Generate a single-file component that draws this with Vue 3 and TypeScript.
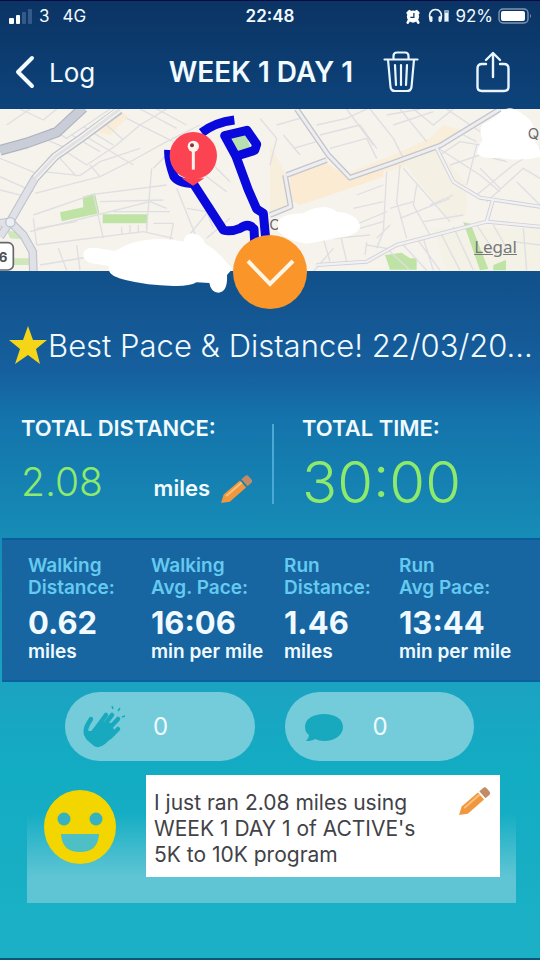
<script setup lang="ts">
interface Stat {
  label: [string, string]
  value: string
  unit: string
}

const stats: Stat[] = [
  { label: ['Walking', 'Distance:'], value: '0.62', unit: 'miles' },
  { label: ['Walking', 'Avg. Pace:'], value: '16:06', unit: 'min per mile' },
  { label: ['Run', 'Distance:'], value: '1.46', unit: 'miles' },
  { label: ['Run', 'Avg Pace:'], value: '13:44', unit: 'min per mile' },
]

const minorRoads: string[] = [
  'M0 160L110 205M0 215L100 260M0 255L80 275M20 60L90 12M60 12L130 45L170 12M150 70L200 100L330 12M130 100L200 130',
  'M190 135L260 180L350 120L420 60L500 12M215 90L300 140M250 65L340 120M320 60L370 105M380 40L520 110M420 12L530 70M470 12L560 60',
  'M130 200L240 212L300 170L420 130M180 160L230 215M250 90L400 180M300 215L270 180',
  'M105 265L300 215L400 165L500 110L600 60M100 330L280 268L500 240M90 380L290 330L450 290L500 310',
  'M280 268L310 400M100 340L110 420M110 420L430 380L520 400M175 430L200 496M455 190L440 370M460 190L520 130M300 290L490 285M340 320L510 320',
  'M365 390L365 365M390 385L390 360M415 385L415 360M440 380L440 355M460 355L520 355L510 410M530 250L590 400M560 310L620 320L640 370M600 200L680 260M640 180L690 230',
  'M620 400L690 340M560 400L640 300M110 370L230 350M120 480L300 450M230 420L240 496',
  'M780 40L830 100L810 180M830 60L900 40M850 90L900 150M880 130L950 110M950 60L1040 40L1100 12M960 90L1080 60L1130 130M990 130L1100 100L1130 160',
  'M1040 12L1120 120M1110 12L1180 100L1210 160M1160 30L1260 12M1180 60L1300 20M1200 12L1280 110M1240 12L1300 60L1360 12M1300 120L1440 210L1500 260',
  'M1320 150L1380 110L1500 130M1350 180L1440 150L1520 170M1390 90L1430 110M1400 240L1430 120M1430 270L1540 180L1620 130M1460 290L1570 190L1620 220M1500 250L1440 190M1550 230L1620 300',
  'M1060 310L1150 290M1065 360L1160 320M1070 270L1150 240M1080 370L1150 350M1130 400L1170 360M1160 200L1150 380L1130 430M1200 180L1190 290L1220 400M1250 240L1240 300L1290 390',
  'M1210 190L1350 350M1200 340L1350 280M1170 310L1240 290M1270 350L1390 330M1290 300L1360 270M1270 400L1300 496M1320 380L1380 496M1360 365L1420 496M1210 420L1280 496M1250 400L1320 496',
  'M1100 420L1160 430L1230 496M1100 410L1095 450M1010 340L1040 470M1000 400L1110 390M940 500L1000 430M970 400L990 470M1430 360L1490 450M1480 360L1520 430M1570 370L1580 496M1540 410L1620 420M1340 12L1500 120',
]
</script>

<template>
  <main class="screen">
    <div class="status">
      <div class="carrier">
        <svg class="signal" viewBox="0 0 25 16" aria-hidden="true">
          <rect x="1" y="10" width="5" height="6" rx="1" fill="#fff" />
          <rect x="8" y="7" width="4" height="9" rx="1" fill="#fff" />
          <rect x="14" y="4" width="4" height="12" rx="1" fill="#345a8a" />
          <rect x="20" y="1" width="4" height="15" rx="1" fill="#345a8a" />
        </svg>
        <span>3</span><span class="network">4G</span>
      </div>
      <time class="clock">22:48</time>
      <div class="power">
        <svg class="alarm" viewBox="0 0 16 16" aria-hidden="true">
          <path d="M2 4L4 2M12 2L14 4M3 13L2 15M13 13L14 15" stroke="#fff" stroke-width="3" stroke-linecap="round" />
          <circle cx="8" cy="8" r="7" fill="#fff" />
          <path d="M9 4V9H5" fill="none" stroke="#0b3565" stroke-width="1.400" />
        </svg>
        <svg class="headset" viewBox="0 0 22 16" aria-hidden="true">
          <path d="M2.500 12C0 6 3 1.500 7.500 1.500S15 6 12.500 12" fill="none" stroke="#e9f4ff" stroke-width="1.600" />
          <rect x="1.500" y="8" width="3" height="6" rx="1.500" fill="#e9f4ff" />
          <rect x="10.500" y="8" width="3" height="6" rx="1.500" fill="#e9f4ff" />
          <rect x="16" y="2" width="5" height="12" rx="1" fill="#8eabc5" />
          <rect x="17" y="5" width="3" height="8" fill="#e9f4ff" />
        </svg>
        <span>92%</span>
        <svg class="battery" viewBox="0 0 34 16" aria-hidden="true">
          <rect x="1" y="1" width="29" height="14" rx="4" fill="none" stroke="#8097b2" stroke-width="1.400" />
          <rect x="3" y="3" width="24" height="10" rx="2" fill="#fff" />
          <path d="M32 6Q34 8 32 10Z" fill="#8097b2" />
        </svg>
      </div>
    </div>

    <header class="nav">
      <a class="back" href="#log">
        <svg viewBox="0 0 20 34" aria-hidden="true"><path d="M17 3L3 17L17 31" fill="none" stroke="#f2faff" stroke-width="4" stroke-linecap="round" stroke-linejoin="round" /></svg>
        <span>Log</span>
      </a>
      <h1>WEEK 1 DAY 1</h1>
      <div class="actions">
        <button type="button" aria-label="Delete workout">
          <svg viewBox="0 0 36 42" aria-hidden="true">
            <g fill="none" stroke="#e9f6ff" stroke-width="2.200" stroke-linecap="round" stroke-linejoin="round">
              <path d="M1.500 8.500H34.500M5 8.500L7.500 36Q8 40 12 40H24Q28 40 28.500 36L31 8.500M10.500 8V5Q10.500 1.500 14 1.500H22Q25.500 1.500 25.500 5V8" />
              <path d="M12 14L13 34M18 14V34M24 14L23 34" />
            </g>
          </svg>
        </button>
        <button type="button" aria-label="Share workout">
          <svg viewBox="0 0 36 42" aria-hidden="true">
            <path d="M11 13H7Q2.500 13 2.500 17.500V36Q2.500 40 7 40H29Q33.500 40 33.500 36V17.500Q33.500 13 29 13H25M18 26V3M11 9L18 2L25 9" fill="none" stroke="#e9f6ff" stroke-width="2.400" stroke-linecap="round" stroke-linejoin="round" />
          </svg>
        </button>
      </div>
    </header>

    <section class="map" aria-label="Route map">
      <svg class="chart" viewBox="0 12 1620 486" preserveAspectRatio="xMidYMid slice">
        <defs>
          <clipPath id="frame"><rect x="0" y="12" width="1620" height="486" /></clipPath>
        </defs>
        <g clip-path="url(#frame)">
          <rect x="0" y="12" width="1620" height="486" fill="#f6f3ec" />
          <g fill="#faebd2">
            <path d="M870 210Q900 170 980 175L1055 225L1150 180V215L1050 250L900 300L870 285Z" />
            <path d="M1050 200L1180 150L1290 100L1330 60L1380 75L1310 125L1200 190L1060 220Z" opacity=".7" />
            <path d="M1330 230L1390 240L1400 300L1330 310Z" opacity=".8" />
            <path d="M280 80L370 25L385 35L330 90Z" opacity=".8" />
            <path d="M810 120L860 210L870 300L810 330Z" opacity=".6" />
          </g>
          <g fill="#f4f1e4">
            <path d="M1210 170L1310 130L1400 240L1400 330L1350 350Z" />
            <path d="M1300 370L1620 370V498H1340Z" opacity=".7" />
          </g>
          <g fill="#bfe3a4">
            <path d="M180 322L250 307L248 275L285 265L298 325L185 349Z" />
            <path d="M308 328H442V355H308Z" />
            <path d="M1155 450L1205 443L1230 460H1250V494H1170Z" />
            <path d="M1390 352L1412 356L1465 492L1440 496Z" />
            <path d="M1480 480L1518 465V496H1480Z" />
            <path d="M20 375L60 385L65 403L30 400ZM40 460H90V480H40Z" opacity=".7" />
          </g>
          <g fill="none" stroke="#dfdee2" stroke-width="4" stroke-linejoin="round">
            <path v-for="road in minorRoads" :key="road" :d="road" />
          </g>
          <g fill="none" stroke-linejoin="round">
            <path d="M0 355L30 350L105 220L165 155L250 95L360 15M30 350L70 390L98 440L100 498M30 350L0 395" stroke="#c0c3cd" stroke-width="26" />
            <path d="M105 220L165 155L250 95L360 12" stroke="#f6f3ec" stroke-width="18" />
            <path d="M0 355L30 350L105 220M30 350L70 390L98 440L100 498M30 350L0 395" stroke="#dfe1e7" stroke-width="19" />
            <path d="M105 220L165 155L250 95L360 12" stroke="#e2e2e6" stroke-width="9" />
            <path d="M0 136L80 114L170 82L250 8" stroke="#aeb3c0" stroke-width="32" />
            <path d="M0 136L80 114L170 82L250 8" stroke="#c9cdd7" stroke-width="25" />
            <path d="M890 12L985 150L1050 218L1180 173L1320 122L1500 12M860 210L980 165M855 210L872 305L810 330" stroke="#c4c5cd" stroke-width="17" />
            <path d="M890 12L985 150L1050 218L1180 173L1320 122L1500 12M860 210L980 165M855 210L872 305L810 330" stroke="#eeeef1" stroke-width="9" />
            <path d="M1310 130L1360 230L1440 278L1620 305M950 480L1100 470L1190 420L1460 350L1620 365M1480 280L1460 350" stroke="#cfd0d7" stroke-width="12" />
            <path d="M1310 130L1360 230L1440 278L1620 305M950 480L1100 470L1190 420L1460 350L1620 365M1480 280L1460 350" stroke="#f1f0f2" stroke-width="7" />
          </g>
          <circle cx="31" cy="352" r="14" fill="#eceef2" stroke="#bdc3cf" stroke-width="4" />
          <path d="M696 100L738 88L752 130L712 142Z" fill="#b8dfb0" />
          <g fill="none" stroke="#0a09dc" stroke-width="27" stroke-linejoin="round">
            <path d="M605 83Q645 52 703 45" />
            <path d="M506 135Q504 165 522 215Q535 235 580 236L615 290L670 375Q690 382 720 370Q745 352 762 372L764 410" />
            <path d="M708 154L674 92L741 76L770 118L764 136L708 154L745 255L770 312L790 325L797 400" />
          </g>
          <path d="M545 220L579 242L613 220Z" fill="#fa4253" />
          <circle cx="580" cy="152" r="71" fill="#fc4352" />
          <path d="M580 137V194" stroke="#fff3ed" stroke-width="9" />
          <circle cx="580" cy="124" r="17" fill="#fff3ed" />
          <circle cx="576" cy="121" r="6" fill="#85383c" />
          <text class="place" x="808" y="376">C</text>
          <rect x="-50" y="413" width="90" height="82" rx="16" fill="#fff" stroke="#66686b" stroke-width="5" />
          <text class="route" x="-4" y="471">6</text>
        </g>
        <g fill="#fff">
          <path d="M250 450Q250 425 290 429L345 438Q400 405 460 403Q510 400 550 410Q555 382 580 386Q605 388 615 415Q640 430 665 455L697 492L681 510Q684 560 655 563Q633 563 628 534L590 532Q565 545 520 543Q440 541 380 526Q330 515 327 496L325 483L275 475Q248 467 250 450Z" />
          <path d="M832 350Q850 325 910 325Q970 290 1010 320Q1070 325 1081 362Q1075 392 1015 398Q955 410 920 416Q870 410 835 380Z" />
          <path d="M1432 145Q1435 120 1448 105Q1435 80 1448 57Q1485 40 1505 18Q1530 0 1560 22Q1600 45 1600 70L1588 96Q1610 110 1620 135V156Q1560 170 1500 158Q1440 164 1432 145Z" />
        </g>
        <text class="place" x="1583" y="102">Q</text>
      </svg>
      <a class="legal" href="#legal">Legal</a>
      <button class="collapse" type="button" aria-label="Collapse map">
        <svg viewBox="0 0 74 74" aria-hidden="true"><path d="M15 26L37 49L60 26" fill="none" stroke="#fff5e4" stroke-width="4" /></svg>
      </button>
    </section>

    <h2 class="headline">
      <svg viewBox="0 0 40 40" aria-hidden="true"><path d="M20 1L25 15H39L28 24L32 39L20 30L7 39L12 24L1 15H15Z" fill="#f5d517" /></svg>
      <span>Best Pace &amp; Distance! 22/03/20…</span>
    </h2>

    <section class="totals">
      <div class="total">
        <h3>TOTAL DISTANCE:</h3>
        <div class="distance">
          <span class="amount">2.08</span>
          <span class="unit">miles</span>
          <button class="edit" type="button" aria-label="Edit distance">
            <svg viewBox="0 0 36 32" aria-hidden="true"><g transform="translate(1 31) rotate(-41)"><path d="M0 0L8 -5H31V5H8Z" fill="#ef9840" /><path d="M9 -2H31" stroke="#ffc27c" stroke-width="2" /><path d="M33 -5H38Q41 -5 41 -2V2Q41 5 38 5H33Z" fill="#c28b65" /></g></svg>
          </button>
        </div>
      </div>
      <div class="total time">
        <h3>TOTAL TIME:</h3>
        <span class="duration">30:00</span>
      </div>
    </section>

    <dl class="stats">
      <div v-for="(stat, i) in stats" :key="i" class="stat">
        <dt>{{ stat.label[0] }}<br />{{ stat.label[1] }}</dt>
        <dd class="value">{{ stat.value }}</dd>
        <dd class="measure">{{ stat.unit }}</dd>
      </div>
    </dl>

    <div class="reactions">
      <button type="button" aria-label="Applaud, 0">
        <svg viewBox="0 0 46 46" aria-hidden="true">
          <path d="M3 27Q3 33 6 36L13 42Q18 45 24 40L35 30L30 19L20 17L10 27Z" fill="#18a9bf" />
          <g fill="none" stroke="#18a9bf" stroke-width="4.500" stroke-linecap="round">
            <path d="M5 30Q4 25 7 20L10 15M14 26L25 11M19 27L31 11M24 29L37 15M29 33L37 25" />
          </g>
          <path d="M32 5L31 2M37 7L39 4M41 13L44 12" fill="none" stroke="#18a9bf" stroke-width="1.500" />
        </svg>
        <span>0</span>
      </button>
      <button type="button" aria-label="Comment, 0">
        <svg viewBox="0 0 46 46" aria-hidden="true"><path d="M23 10C12 10 4 15 4 23Q4 28 8 31Q8 34 5 37Q11 37 14 35Q18 37 23 37C34 37 42 31 42 23S34 10 23 10Z" fill="#18a9bf" /></svg>
        <span>0</span>
      </button>
    </div>

    <section class="post">
      <svg class="face" viewBox="0 0 72 74" aria-hidden="true">
        <ellipse cx="36" cy="37" rx="36" ry="37" fill="#f3d500" />
        <circle cx="20" cy="29" r="6.500" fill="#35b4c0" />
        <circle cx="52" cy="29" r="6.500" fill="#35b4c0" />
        <path d="M17 44H55Q54 62 36 62T17 44Z" fill="#4ebfc4" />
      </svg>
      <div class="message">
        <p>I just ran 2.08 miles using WEEK 1 DAY 1 of ACTIVE's 5K to 10K program</p>
        <button class="edit" type="button" aria-label="Edit message">
          <svg viewBox="0 0 36 32" aria-hidden="true"><g transform="translate(1 31) rotate(-41)"><path d="M0 0L8 -5H31V5H8Z" fill="#ef9840" /><path d="M9 -2H31" stroke="#ffc27c" stroke-width="2" /><path d="M33 -5H38Q41 -5 41 -2V2Q41 5 38 5H33Z" fill="#c28b65" /></g></svg>
        </button>
      </div>
    </section>
  </main>
</template>

<style>
body {
  margin: 0;
  background: #1ab0c6;
}
</style>

<style scoped>
* {
  box-sizing: border-box;
}

.screen {
  min-height: 100vh;
  overflow: hidden;
  border-top: 1px solid #060b45;
  border-bottom: 2px solid #075878;
  background: linear-gradient(#0b3464 0, #0d4279 100px, #11508a 270px, #165f9e 370px, #1473ab 415px, #168bb6 530px, #1ba4c2 690px, #12acc3 770px, #1bb0c5 930px);
  color: #f1faff;
  font-family: Inter, "Liberation Sans", sans-serif;
}

h1,
h2,
h3,
p,
dl,
dd {
  margin: 0;
}

svg {
  display: block;
  flex: none;
}

button {
  padding: 0;
  border: 0;
  background: none;
  color: inherit;
  font: inherit;
  cursor: pointer;
}

a {
  color: inherit;
  text-decoration: none;
}

.status {
  display: grid;
  grid-template-columns: 1fr auto 1fr;
  align-items: center;
  height: 30px;
  padding: 0 8px;
  font-size: 17px;
}

.carrier,
.power {
  display: flex;
  align-items: center;
}

.signal {
  width: 25px;
  height: 16px;
  margin-right: 6px;
}

.network {
  margin-left: 13px;
}

.clock {
  font-weight: 600;
}

.power {
  justify-content: flex-end;
  gap: 5px;
}

.alarm {
  width: 14px;
  height: 15px;
  margin-right: 3px;
}

.headset {
  width: 22px;
  height: 16px;
}

.battery {
  width: 34px;
  height: 16px;
}

.nav {
  display: grid;
  grid-template-columns: 1fr auto auto;
  gap: 30px;
  align-items: center;
  height: 78px;
  padding: 4px 29px 0 15px;
}

.back {
  display: flex;
  align-items: center;
  gap: 14px;
  font-size: 26px;
}

.back svg {
  width: 20px;
  height: 34px;
}

h1 {
  font-size: 28px;
  font-weight: 600;
}

.actions {
  display: flex;
  gap: 56px;
}

.actions svg {
  width: 36px;
  height: 42px;
}

.map {
  position: relative;
  z-index: 1;
  height: 162px;
}

.chart {
  width: 100%;
  height: 100%;
  overflow: visible;
}

.place {
  fill: #66686c;
  font-size: 45px;
}

.route {
  fill: #4d4f52;
  font-size: 40px;
  font-weight: 700;
}

.legal {
  position: absolute;
  right: 23px;
  bottom: 14px;
  color: #77777a;
  font-family: "Noto Sans", sans-serif;
  font-size: 17px;
  line-height: 20px;
  text-decoration: underline;
}

.collapse {
  position: absolute;
  bottom: -38px;
  left: 50%;
  width: 74px;
  height: 74px;
  border-radius: 50%;
  background: #fa952a;
  transform: translateX(-50%);
}

.headline {
  display: flex;
  align-items: center;
  height: 44px;
  margin-top: 52px;
  padding-left: 8px;
  font-size: 31px;
  font-weight: 300;
  white-space: nowrap;
}

.headline svg {
  width: 40px;
  height: 40px;
}

.totals {
  display: grid;
  grid-template-columns: 1fr 1fr;
  margin-top: 49px;
  padding-left: 4px;
}

.total {
  padding-left: 17px;
}

.time {
  padding-left: 30px;
  background: linear-gradient(#4aa9d5, #4aa9d5) 0 8px / 2px 80px no-repeat;
}

h3 {
  font-size: 22px;
  font-weight: 600;
  line-height: 24px;
}

.distance {
  display: flex;
  align-items: baseline;
  padding: 20px 18px 0 0;
}

.amount,
.duration {
  color: #8eea6b;
  font-weight: 300;
}

.amount {
  flex: 1;
  font-size: 39px;
  line-height: 44px;
}

.duration {
  display: block;
  font-size: 58px;
  line-height: 60px;
  margin-top: 12px;
}

.unit {
  font-size: 22px;
  font-weight: 600;
}

.edit svg {
  width: 34px;
  height: 30px;
}

.distance .edit {
  align-self: flex-end;
  margin-left: 10px;
}

.stats {
  display: grid;
  grid-template-columns: 123px 133px 115px 1fr;
  margin: 26px 0 0 2px;
  padding: 15px 0 17px 26px;
  border-top: 2px solid #0a5d9d;
  border-bottom: 2px solid #0b609f;
  background: #1766a2;
  font-weight: 600;
}

dt {
  color: #65caef;
  font-size: 19px;
  line-height: 22px;
}

.value {
  padding-top: 6px;
  font-size: 31px;
  font-weight: 700;
  line-height: 36px;
}

.measure {
  font-size: 19px;
  line-height: 22px;
}

.reactions {
  display: grid;
  grid-template-columns: 1fr 1fr;
  gap: 30px;
  padding: 10px 66px 0 65px;
}

.reactions button {
  display: flex;
  align-items: center;
  gap: 26px;
  height: 69px;
  padding: 0 16px;
  border-radius: 35px;
  background: #74ccda;
  font-size: 24px;
}

.reactions svg {
  width: 46px;
  height: 46px;
}

.post {
  display: flex;
  gap: 30px;
  margin: 14px 24px 54px 27px;
  padding: 0 16px 26px 17px;
  background: linear-gradient(#12adc300 0, #12adc300 30%, #5fc5d4 80%);
}

.face {
  width: 72px;
  height: 74px;
  margin-top: 15px;
}

.message {
  display: flex;
  flex: 1;
  align-items: flex-start;
  justify-content: space-between;
  padding: 15px 8px 9px;
  background: #fff;
  color: #414247;
}

.message p {
  max-width: 290px;
  font-size: 21px;
  line-height: 26px;
}

.message .edit {
  margin-top: -4px;
}
</style>
